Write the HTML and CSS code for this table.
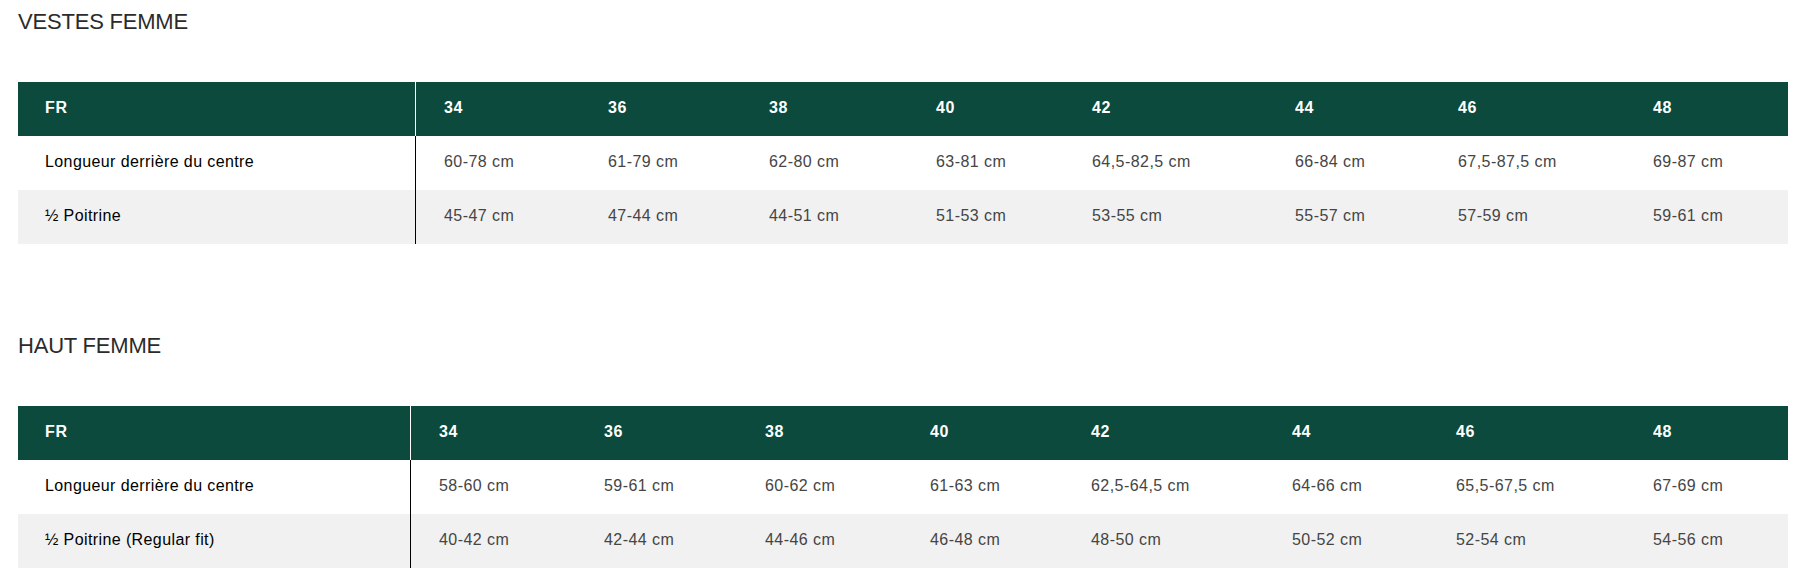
FILE: index.html
```html
<!DOCTYPE html>
<html lang="fr">
<head>
<meta charset="utf-8">
<title>Guide des tailles</title>
<link rel="stylesheet" href="styles.css">
</head>
<body>
<main class="page">
  <section class="size-section">
    <h2 class="size-title">VESTES FEMME</h2>
    <table class="size-table">
      <colgroup>
        <col class="w398"><col class="w164"><col class="w161"><col class="w167"><col class="w156"><col class="w203"><col class="w163"><col class="w195"><col class="w163">
      </colgroup>
      <thead>
        <tr><th>FR</th><th>34</th><th>36</th><th>38</th><th>40</th><th>42</th><th>44</th><th>46</th><th>48</th></tr>
      </thead>
      <tbody>
        <tr><td>Longueur derrière du centre</td><td>60-78 cm</td><td>61-79 cm</td><td>62-80 cm</td><td>63-81 cm</td><td>64,5-82,5 cm</td><td>66-84 cm</td><td>67,5-87,5 cm</td><td>69-87 cm</td></tr>
        <tr><td>½ Poitrine</td><td>45-47 cm</td><td>47-44 cm</td><td>44-51 cm</td><td>51-53 cm</td><td>53-55 cm</td><td>55-57 cm</td><td>57-59 cm</td><td>59-61 cm</td></tr>
      </tbody>
    </table>
  </section>
  <section class="size-section">
    <h2 class="size-title">HAUT FEMME</h2>
    <table class="size-table">
      <colgroup>
        <col class="w393"><col class="w165"><col class="w161"><col class="w165"><col class="w161"><col class="w201"><col class="w164"><col class="w197"><col class="w163">
      </colgroup>
      <thead>
        <tr><th>FR</th><th>34</th><th>36</th><th>38</th><th>40</th><th>42</th><th>44</th><th>46</th><th>48</th></tr>
      </thead>
      <tbody>
        <tr><td>Longueur derrière du centre</td><td>58-60 cm</td><td>59-61 cm</td><td>60-62 cm</td><td>61-63 cm</td><td>62,5-64,5 cm</td><td>64-66 cm</td><td>65,5-67,5 cm</td><td>67-69 cm</td></tr>
        <tr><td>½ Poitrine (Regular fit)</td><td>40-42 cm</td><td>42-44 cm</td><td>44-46 cm</td><td>46-48 cm</td><td>48-50 cm</td><td>50-52 cm</td><td>52-54 cm</td><td>54-56 cm</td></tr>
      </tbody>
    </table>
  </section>
</main>
</body>
</html>
```
FILE: styles.css
```css
html, body {
  margin: 0;
  padding: 0;
  background: #fff;
}

.page {
  padding: 9px 15px 0 18px;
  font-family: "Liberation Sans", Arial, sans-serif;
}

.size-section {
  margin-bottom: 89px;
}

.size-section:last-child {
  margin-bottom: 0;
}

.size-title {
  margin: 0 0 47px;
  font-size: 22px;
  line-height: 26px;
  font-weight: normal;
  letter-spacing: -0.2px;
  color: #2b2b2b;
}

.size-table {
  width: 1770px;
  table-layout: fixed;
  border-collapse: separate;
  border-spacing: 0;
}

.size-table tr {
  height: 54px;
}

.size-table th,
.size-table td {
  padding: 0 0 2px 28px;
  text-align: left;
  vertical-align: middle;
  white-space: nowrap;
}

.size-table th:first-child,
.size-table td:first-child {
  padding-left: 27px;
}

.size-table thead th {
  background: #0b4a3c;
  color: #fff;
  font-size: 16px;
  font-weight: bold;
  letter-spacing: 0.7px;
}

.size-table thead th:first-child {
  border-right: 1px solid #fff;
}

.size-table tbody td {
  font-size: 16px;
  letter-spacing: 0.45px;
  color: #454545;
}

.size-table tbody td:first-child {
  color: #000;
  border-right: 1px solid #000;
  letter-spacing: 0.4px;
}

.size-table tbody tr:nth-child(2) td {
  background: #f1f1f1;
}

.w393 { width: 393px; }
.w398 { width: 398px; }
.w156 { width: 156px; }
.w161 { width: 161px; }
.w163 { width: 163px; }
.w164 { width: 164px; }
.w165 { width: 165px; }
.w167 { width: 167px; }
.w195 { width: 195px; }
.w197 { width: 197px; }
.w201 { width: 201px; }
.w203 { width: 203px; }
```
